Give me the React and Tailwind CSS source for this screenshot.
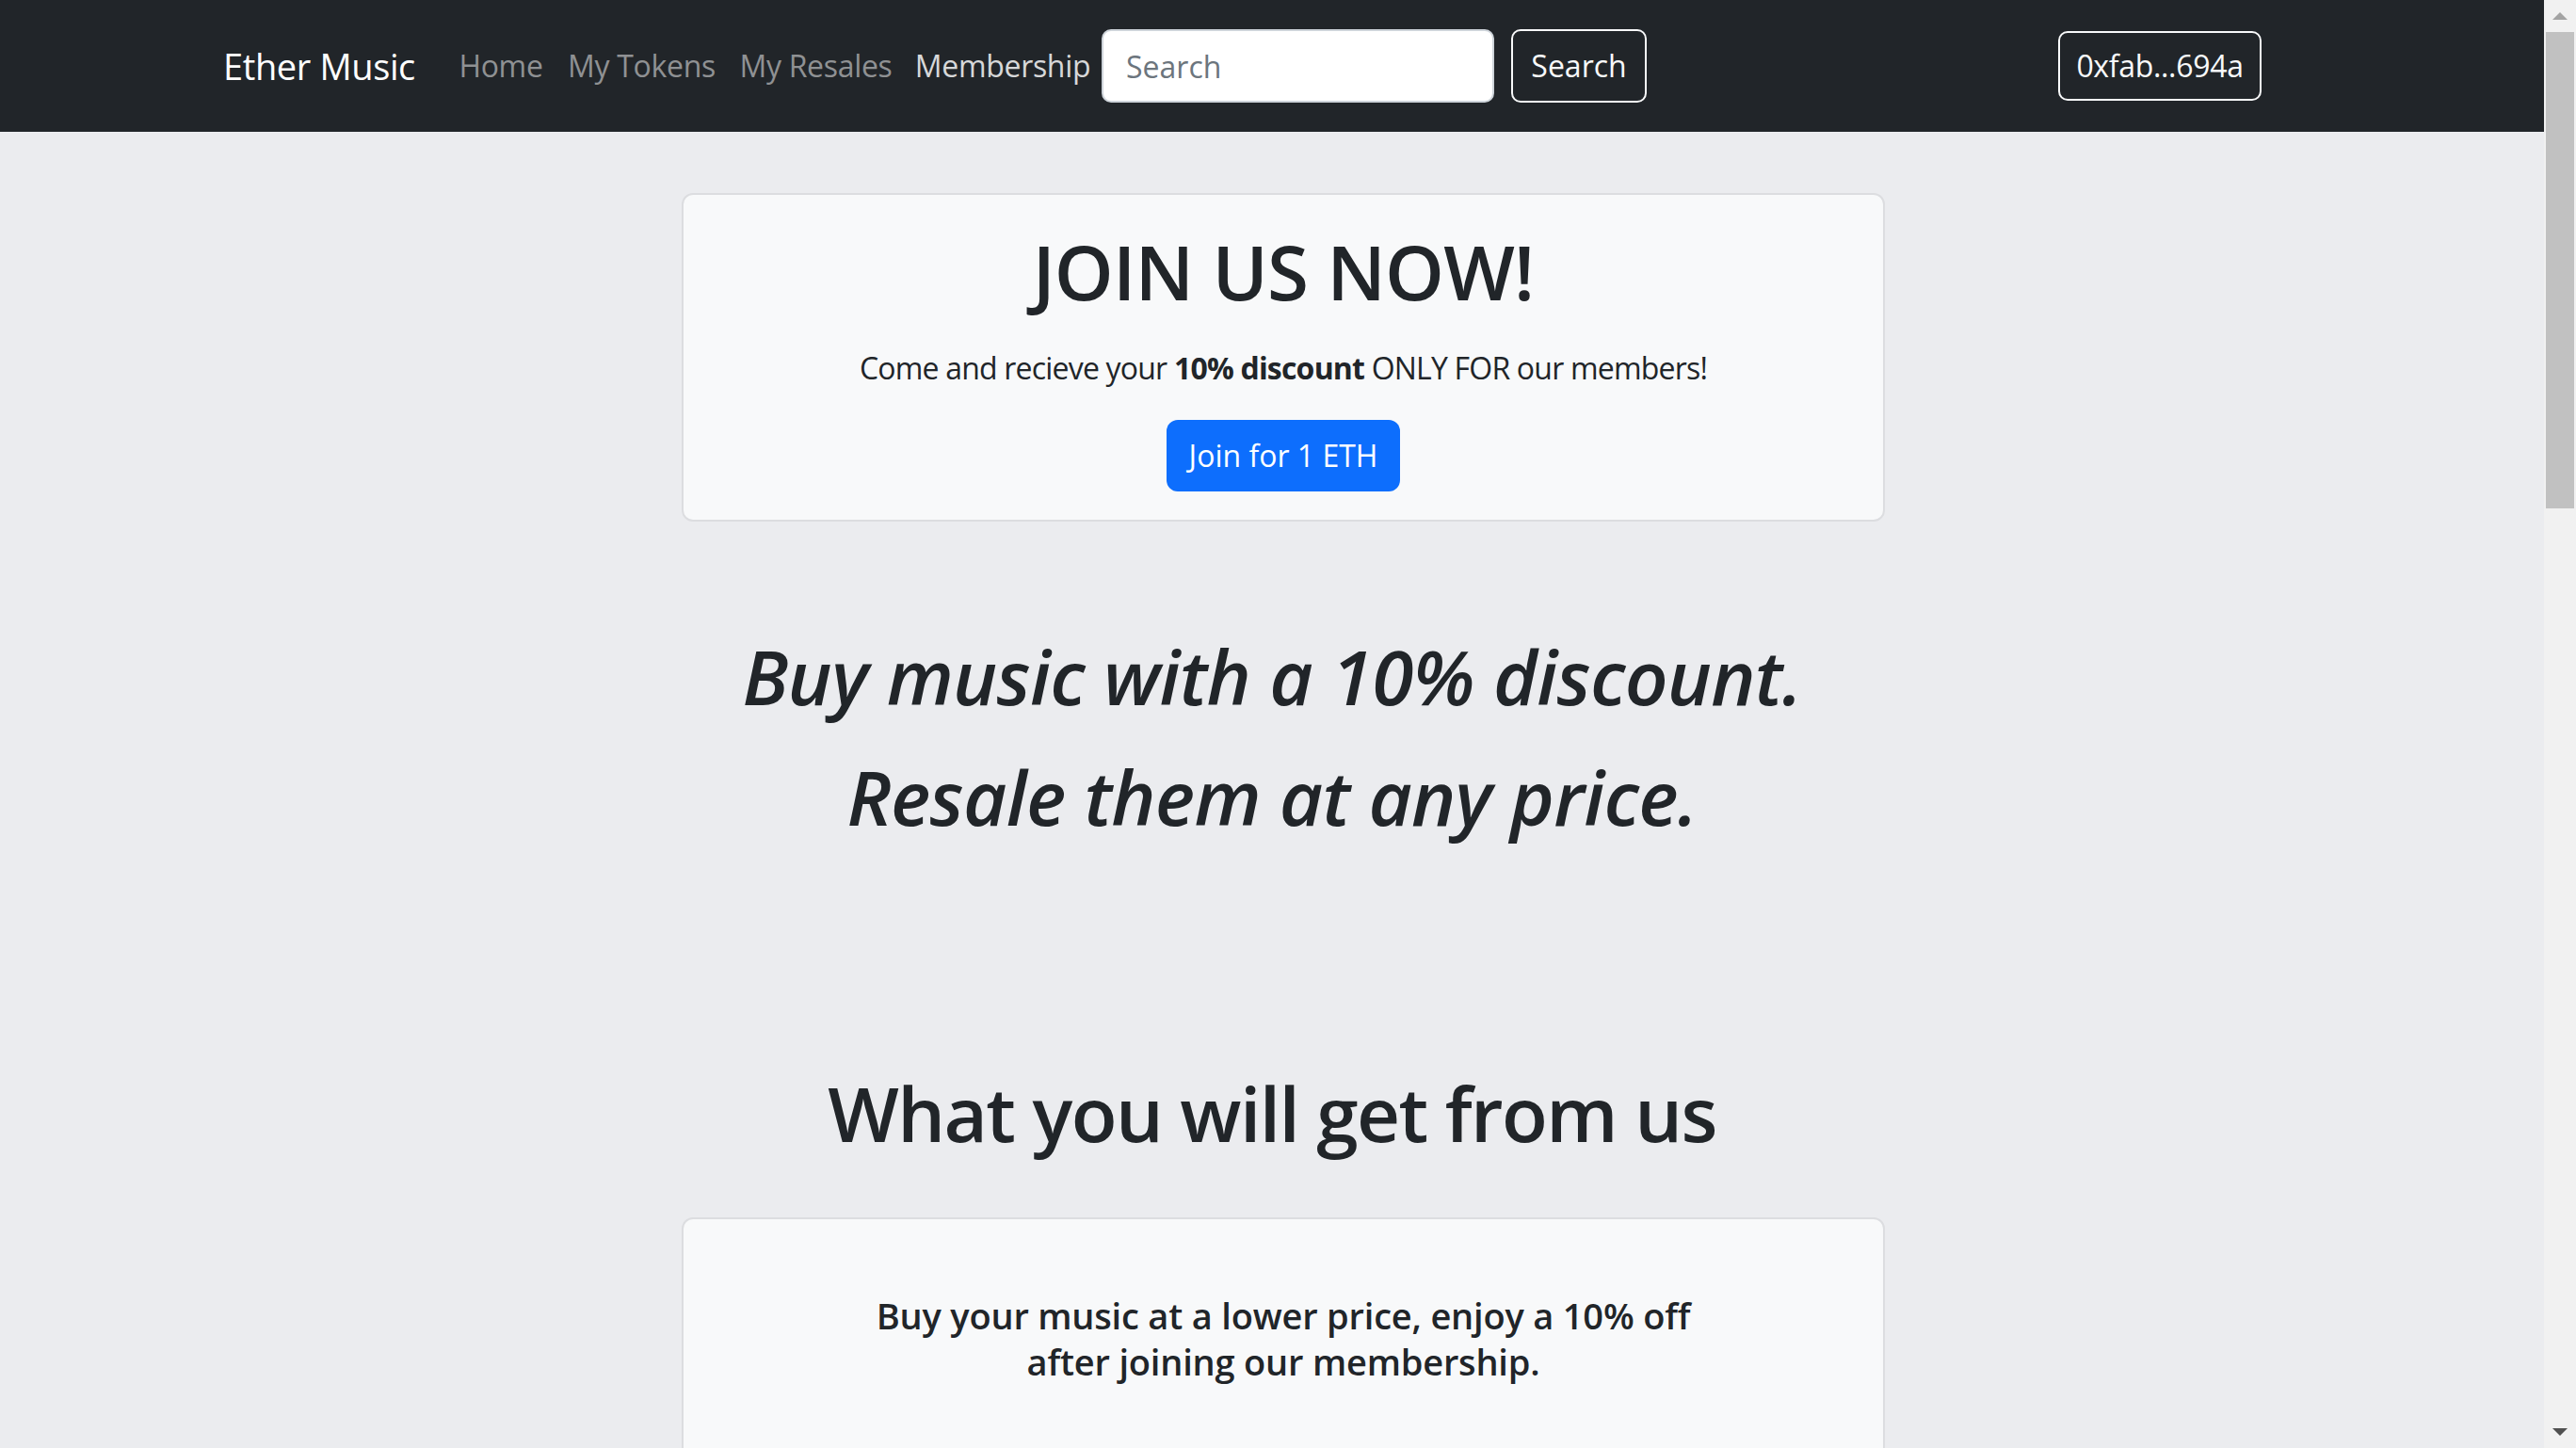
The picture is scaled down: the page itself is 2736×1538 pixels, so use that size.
import React from "react";

// Navegación superior: cada enlace con ancho fijo para que las posiciones
// coincidan aunque la fuente sea distinta.
const NAV_LINKS = [
  { label: "Home", w: "w-[116px]", active: false },
  { label: "My Tokens", w: "w-[183px]", active: false },
  { label: "My Resales", w: "w-[187px]", active: false },
  { label: "Membership", w: "w-[210px]", active: true },
];

function Navbar() {
  return (
    <nav className="h-[140px] shrink-0 bg-[#212529] flex items-center pl-[237px] pr-[300px]">
      <a href="#" className="w-[237px] text-[38px] leading-[60px] tracking-[-0.01em] text-white whitespace-nowrap">
        Ether Music
      </a>
      <ul className="flex items-center">
        {NAV_LINKS.map((item) => (
          <li key={item.label} className={item.w}>
            <a
              href="#"
              className={`block text-center text-[32px] leading-[48px] tracking-[-0.01em] whitespace-nowrap ${
                item.active ? "text-[#d7d8d9]" : "text-[#8f9193]"
              }`}
            >
              {item.label}
            </a>
          </li>
        ))}
      </ul>
      <form className="flex items-center" onSubmit={(e) => e.preventDefault()}>
        <input
          type="search"
          placeholder="Search"
          className="w-[417px] h-[78px] bg-white border-2 border-[#ced4da] rounded-[10px] px-[24px] text-[32px] text-[#212529] placeholder:text-[#6c757d] outline-none"
        />
        <button
          type="submit"
          className="ml-[18px] w-[144px] h-[78px] border-2 border-[#f8f9fa] rounded-[10px] text-[32px] text-[#f8f9fa]"
        >
          Search
        </button>
      </form>
      <div className="flex-1" />
      <button className="w-[216px] h-[74px] border-2 border-[#f8f9fa] rounded-[10px] text-[32px] tracking-[-0.01em] text-[#f8f9fa] whitespace-nowrap">
        0xfab...694a
      </button>
    </nav>
  );
}

function Scrollbar() {
  return (
    <div className="w-[34px] shrink-0 h-full bg-[#f1f1f1] flex flex-col items-center">
      <div className="h-[34px] w-full flex items-center justify-center">
        <svg width="16" height="8" viewBox="0 0 16 8">
          <path d="M0 8 L8 0 L16 8 Z" fill="#a3a3a3" />
        </svg>
      </div>
      <div className="w-[30px] h-[506px] bg-[#c1c1c1]" />
      <div className="flex-1" />
      <div className="h-[34px] w-full flex items-center justify-center">
        <svg width="16" height="8" viewBox="0 0 16 8">
          <path d="M0 0 L16 0 L8 8 Z" fill="#505050" />
        </svg>
      </div>
    </div>
  );
}

export default function App() {
  return (
    <div className="flex h-screen w-full overflow-hidden bg-[#ebecef] text-[#212529] font-['Open_Sans','Noto_Sans',sans-serif]">
      <div className="flex-1 min-w-0 flex flex-col">
        <Navbar />

        <main className="flex flex-col">
          <section className="mt-[65px] ml-[724px] w-[1278px] border-2 border-[#dcdde0] rounded-[12px] bg-[#f8f9fa] flex flex-col items-center pt-[33px] pb-[30px]">
            <h1 className="text-[80px] leading-[96px] font-semibold tracking-[-0.01em]">JOIN US NOW!</h1>
            <p className="mt-[31px] text-[32px] leading-[48px] tracking-[-0.025em]">
              Come and recieve your <strong className="font-bold">10% discount</strong> ONLY FOR our members!
            </p>
            <button className="mt-[31px] w-[248px] h-[76px] rounded-[12px] bg-[#0d6efd] text-white text-[32px]">
              Join for 1 ETH
            </button>
          </section>

          <div className="mt-[100px] text-center italic font-semibold text-[80px] leading-[128px] tracking-[-0.009em]">
            <p>Buy music with a 10% discount.</p>
            <p>Resale them at any price.</p>
          </div>

          <h2 className="mt-[224px] text-center text-[80px] leading-[96px] font-semibold tracking-[-0.02em]">
            What you will get from us
          </h2>

          <section className="mt-[63px] ml-[724px] w-[1278px] border-2 border-[#dcdde0] rounded-[12px] bg-[#f8f9fa] pt-[78px] pb-[200px] text-center">
            <h5 className="text-[38px] leading-[49px] font-semibold tracking-[-0.005em]">
              Buy your music at a lower price, enjoy a 10% off
              <br />
              after joining our membership.
            </h5>
          </section>
        </main>
      </div>
      <Scrollbar />
    </div>
  );
}
